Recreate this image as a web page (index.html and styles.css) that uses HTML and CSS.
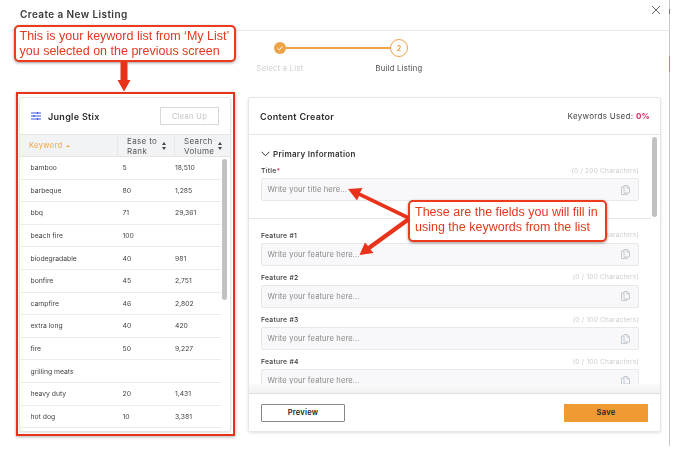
FILE: index.html
```html
<!DOCTYPE html>
<html lang="en">
<head>
  <meta charset="UTF-8">
  <title>Create a New Listing</title>
  <link rel="stylesheet" href="styles.css">
</head>
<body>
  <div class="modal">
    <div class="modal-header">
      <div class="modal-title">Create a New Listing</div>
      <svg class="close-icon" width="10" height="10" viewBox="0 0 10 10"><path d="M1 1l8 8M9 1l-8 8" stroke="#666" stroke-width="1" fill="none"/></svg>
    </div>

    <div class="stepper">
      <div class="step">
        <div class="step-dot done">
          <svg width="8" height="8" viewBox="0 0 8 8"><path d="M1.500 4.200l1.800 1.700 3.200-3.600" stroke="#fff" stroke-width="1" fill="none"/></svg>
        </div>
        <div class="step-label muted">Select a List</div>
      </div>
      <div class="step-line"></div>
      <div class="step">
        <div class="step-dot current">2</div>
        <div class="step-label">Build Listing</div>
      </div>
    </div>

    <div class="columns">
      <div class="card keyword-card">
        <div class="card-header">
          <div class="list-name">
            <svg width="10" height="8" viewBox="0 0 10 8"><path d="M0 1h10M0 4h10M0 7h10" stroke="#3d55e0" stroke-width="1"/><path d="M6.500 0v2M3 3v2M6.500 6v2" stroke="#3d55e0" stroke-width="1.200"/></svg>
            <span>Jungle Stix</span>
          </div>
          <button class="cleanup-button">Clean Up</button>
        </div>
        <div class="table-head">
          <div class="head-cell sorted">Keyword <span class="sort-up"></span></div>
          <div class="head-cell">Ease to Rank <span class="sort-both"></span></div>
          <div class="head-cell">Search Volume <span class="sort-both"></span></div>
        </div>
        <div class="table-body">
          <div class="row"><span>bamboo</span><span>5</span><span>18,510</span></div>
          <div class="row"><span>barbeque</span><span>80</span><span>1,285</span></div>
          <div class="row"><span>bbq</span><span>71</span><span>29,361</span></div>
          <div class="row"><span>beach fire</span><span>100</span><span></span></div>
          <div class="row"><span>biodegradable</span><span>40</span><span>981</span></div>
          <div class="row"><span>bonfire</span><span>45</span><span>2,751</span></div>
          <div class="row"><span>campfire</span><span>46</span><span>2,802</span></div>
          <div class="row"><span>extra long</span><span>40</span><span>420</span></div>
          <div class="row"><span>fire</span><span>50</span><span>9,227</span></div>
          <div class="row"><span>grilling meats</span><span></span><span></span></div>
          <div class="row"><span>heavy duty</span><span>20</span><span>1,431</span></div>
          <div class="row"><span>hot dog</span><span>10</span><span>3,381</span></div>
          <div class="scroll-thumb list-thumb"></div>
        </div>
      </div>

      <div class="card creator-card">
        <div class="card-header">
          <div class="creator-title">Content Creator</div>
          <div class="keywords-used">Keywords Used: <b>0%</b></div>
        </div>
        <div class="form-area">
          <div class="section-title">
            <svg width="9" height="6" viewBox="0 0 9 6"><path d="M.7.800l3.800 4 3.800-4" stroke="#333" stroke-width="1" fill="none"/></svg>
            Primary Information
          </div>
          <div class="field first-field">
            <div class="field-top"><span class="field-label">Title<i>*</i></span><span class="field-count">(0 / 200 Characters)</span></div>
            <div class="field-input">Write your title here...<svg class="copy-icon" width="9" height="10" viewBox="0 0 9 10"><path d="M3 2H.5v7.500h5.500V8M3 .5h3L8.500 3v5H3zM6 .5V3h2.500" stroke="#bcc3cc" stroke-width=".9" fill="none"/></svg></div>
          </div>
          <div class="field-divider"></div>
          <div class="field">
            <div class="field-top"><span class="field-label">Feature #1</span><span class="field-count">(0 / 100 Characters)</span></div>
            <div class="field-input">Write your feature here...<svg class="copy-icon" width="9" height="10" viewBox="0 0 9 10"><path d="M3 2H.5v7.500h5.500V8M3 .5h3L8.500 3v5H3zM6 .5V3h2.500" stroke="#bcc3cc" stroke-width=".9" fill="none"/></svg></div>
          </div>
          <div class="field">
            <div class="field-top"><span class="field-label">Feature #2</span><span class="field-count">(0 / 100 Characters)</span></div>
            <div class="field-input">Write your feature here...<svg class="copy-icon" width="9" height="10" viewBox="0 0 9 10"><path d="M3 2H.5v7.500h5.500V8M3 .5h3L8.500 3v5H3zM6 .5V3h2.500" stroke="#bcc3cc" stroke-width=".9" fill="none"/></svg></div>
          </div>
          <div class="field">
            <div class="field-top"><span class="field-label">Feature #3</span><span class="field-count">(0 / 100 Characters)</span></div>
            <div class="field-input">Write your feature here...<svg class="copy-icon" width="9" height="10" viewBox="0 0 9 10"><path d="M3 2H.5v7.500h5.500V8M3 .5h3L8.500 3v5H3zM6 .5V3h2.500" stroke="#bcc3cc" stroke-width=".9" fill="none"/></svg></div>
          </div>
          <div class="field">
            <div class="field-top"><span class="field-label">Feature #4</span><span class="field-count">(0 / 100 Characters)</span></div>
            <div class="field-input">Write your feature here...<svg class="copy-icon" width="9" height="10" viewBox="0 0 9 10"><path d="M3 2H.5v7.500h5.500V8M3 .5h3L8.500 3v5H3zM6 .5V3h2.500" stroke="#bcc3cc" stroke-width=".9" fill="none"/></svg></div>
          </div>
          <div class="scroll-thumb form-thumb"></div>
        </div>
        <div class="card-footer">
          <button class="preview-button">Preview</button>
          <button class="save-button">Save</button>
        </div>
      </div>
    </div>
  </div>

  <!-- red annotations on top of the screenshot -->
  <div class="list-frame"></div>
  <div class="callout callout-list">This is your keyword list from ‘My List’<br>you selected on the previous screen</div>
  <div class="callout callout-fields">These are the fields you will fill in<br>using the keywords from the list</div>
  <svg class="arrows" width="680" height="453" viewBox="0 0 680 453">
    <path d="M120.500 62h7v18h3l-6.500 11.500L117.500 80h3z" fill="#e8321a"/>
    <path d="M410 216.500l-50-24 2.500-4.500-14.500 1 9 11.500 2-4.500 49.500 24z" fill="#e8321a"/>
    <path d="M408 217l-40 29-3-3.500-5.500 12.500 14-2-3-3.500 40-29z" fill="#e8321a"/>
  </svg>
</body>
</html>
```

FILE: styles.css
```css
* {
  margin: 0;
  padding: 0;
  box-sizing: border-box;
  font-family: Inter, 'Open Sans', sans-serif;
}

body {
  background-color: #fff;
  color: #333;
  width: 680px;
  height: 453px;
  overflow: hidden;
  position: relative;
  filter: blur(0.3px);
}

.modal {
  width: 670px;
  height: 446px;
  padding-left: 19px;
  border-right: 1px solid #c9c9c9;
  border-image: linear-gradient(#c9c9c9 10px, #777 10px, #777 15px, #c9c9c9 15px, #c9c9c9 57px, #a89468 57px, #a89468 73px, #c9c9c9 73px) 1;
}

.modal-header {
  height: 31px;
  margin-left: -9px;
  padding: 0 8px 0 10px;
  border-bottom: 1px solid #e8e8e8;
  display: flex;
  justify-content: space-between;
  align-items: center;
}

.modal-title {
  font-size: 10px;
  font-weight: 600;
  letter-spacing: 0.4px;
  color: #3a3a3a;
  margin-top: -2px;
}

.close-icon {
  margin-top: -10px;
}

.stepper {
  height: 66px;
  padding: 8px 0 0 222px;
  display: flex;
  align-items: flex-start;
}

.step {
  width: 78px;
  height: 40px;
  display: flex;
  flex-direction: column;
  align-items: center;
}

.step-dot {
  height: 18px;
  width: 18px;
  display: flex;
  align-items: center;
  justify-content: center;
  border-radius: 50%;
  font-size: 7px;
  font-weight: 700;
  color: #efa243;
}

.step-dot.done {
  width: 12px;
  height: 12px;
  margin: 3px 0;
  background-color: #efa243;
}

.step-dot.current {
  border: 1.5px solid #efa243;
}

.step-label {
  margin-top: 7px;
  font-size: 7.500px;
  letter-spacing: 0.3px;
  color: #444;
  white-space: nowrap;
}

.step-label.muted {
  color: #ccc;
}

.step-line {
  width: 105px;
  height: 1.500px;
  margin: 8px -31px 0 -33px;
  background-color: #efa243;
}

.columns {
  display: flex;
  gap: 17px;
}

.card {
  background-color: #fff;
  border: 1px solid #e6e6e6;
  border-radius: 3px;
  box-shadow: 0 1px 3px rgba(0, 0, 0, 0.12);
  height: 335px;
  overflow: hidden;
  display: flex;
  flex-direction: column;
}

.keyword-card {
  width: 212px;
}

.creator-card {
  width: 413px;
}

.card-header {
  height: 37px;
  flex-shrink: 0;
  display: flex;
  justify-content: space-between;
  align-items: center;
  padding: 0 11px;
  border-bottom: 1px solid #e6e6e6;
}

.list-name {
  display: flex;
  align-items: center;
  gap: 7px;
  font-size: 9px;
  font-weight: 600;
  letter-spacing: 0.3px;
  color: #2d2d2d;
}

.cleanup-button {
  width: 59px;
  height: 18px;
  background-color: #fff;
  border: 1px solid #d9d9d9;
  font-size: 7.500px;
  letter-spacing: 0.3px;
  color: #c4c4c4;
}

.table-head {
  height: 22px;
  flex-shrink: 0;
  display: grid;
  grid-template-columns: 97px 57px 56px;
  background-color: #f1f3f4;
  border-bottom: 1px solid #e2e4e5;
}

.head-cell {
  position: relative;
  display: flex;
  align-items: center;
  padding: 0 15px 0 9px;
  font-size: 8px;
  line-height: 10px;
  letter-spacing: 0.35px;
  color: #555;
  border-left: 1px solid #e6e8e9;
}

.head-cell.sorted {
  font-size: 7.500px;
  color: #eda649;
  gap: 4px;
  border-left: none;
}

.sort-up {
  border: 2px solid transparent;
  border-top: none;
  border-bottom: 2.500px solid #eda649;
}

.sort-both {
  position: absolute;
  right: 8px;
  top: 7px;
  border: 2.500px solid transparent;
  border-top: none;
  border-bottom: 3px solid #444;
}

.sort-both::after {
  content: "";
  position: absolute;
  left: -2.500px;
  top: 5px;
  border: 2.500px solid transparent;
  border-bottom: none;
  border-top: 3px solid #444;
}

.table-body {
  position: relative;
  flex-grow: 1;
  overflow: hidden;
  padding-right: 9px;
}

.row {
  height: 22.600px;
  display: grid;
  grid-template-columns: 92px 52.500px 1fr;
  align-items: center;
  padding-left: 10.500px;
  font-size: 6.800px;
  color: #444;
  border-bottom: 1px solid #ececec;
}

.scroll-thumb {
  position: absolute;
  width: 5px;
  border-radius: 3px;
  background-color: #c2c2c2;
}

.list-thumb {
  top: 2px;
  right: 3px;
  height: 141px;
}

.creator-title {
  font-size: 9px;
  font-weight: 600;
  letter-spacing: 0.3px;
  color: #2d2d2d;
}

.keywords-used {
  font-size: 8px;
  letter-spacing: 0.3px;
  color: #444;
  margin-right: -1px;
}

.keywords-used b {
  color: #e0245e;
}

.form-area {
  position: relative;
  flex-grow: 1;
  overflow: hidden;
  padding: 0 21px 0 12px;
}

.section-title {
  height: 35px;
  padding-top: 3px;
  display: flex;
  align-items: center;
  gap: 3px;
  font-size: 8px;
  font-weight: 600;
  letter-spacing: 0.3px;
  color: #333;
}

.field {
  height: 42.300px;
}

.first-field {
  height: 36px;
  margin-top: -5px;
}

.field-divider {
  height: 11.500px;
  margin: 17px -12px 0;
  border-top: 1px solid #e6e6e6;
}

.field-top {
  display: flex;
  justify-content: space-between;
  align-items: center;
  height: 11px;
  margin-bottom: 2px;
}

.field-label {
  font-size: 6.800px;
  font-weight: 500;
  letter-spacing: 0.25px;
  color: #333;
}

.field-label i {
  font-style: normal;
  color: #e0245e;
}

.field-count {
  font-size: 6.500px;
  letter-spacing: 0.25px;
  color: #ccc;
}

.field-input {
  height: 23px;
  display: flex;
  justify-content: space-between;
  align-items: center;
  padding: 0 8px 0 5.500px;
  background-color: #f8f8fa;
  border: 1px solid #e8e8ea;
  border-radius: 2px;
  font-size: 7.500px;
  letter-spacing: 0.15px;
  color: #888;
}

.form-thumb {
  top: 2px;
  right: 3px;
  height: 80px;
}

.card-footer {
  position: relative;
  height: 38px;
  flex-shrink: 0;
  display: flex;
  justify-content: space-between;
  align-items: center;
  padding: 0 12px;
  background-color: #fff;
  border-top: 1px solid #dedede;
}

.card-footer::before {
  content: "";
  position: absolute;
  left: 0;
  right: 0;
  top: -10px;
  height: 9px;
  background: linear-gradient(#fafafa, #f2f2f2);
}

.preview-button,
.save-button {
  width: 84px;
  height: 18px;
  font-size: 7.500px;
  font-weight: 600;
  letter-spacing: 0.25px;
  color: #222;
}

.preview-button {
  background-color: #fff;
  border: 1px solid #888;
  border-radius: 1px;
}

.save-button {
  background-color: #f09a33;
  border: none;
}

.list-frame {
  position: absolute;
  left: 16px;
  top: 92px;
  width: 219px;
  height: 344px;
  border: 2px solid #e8321a;
  box-shadow: 0 1px 3px rgba(0, 0, 0, 0.3);
}

.callout {
  position: absolute;
  background-color: #fff;
  border: 2px solid #ee3a1c;
  border-radius: 5px;
  box-shadow: 0 1px 3px rgba(0, 0, 0, 0.4);
  font-family: 'Liberation Sans', sans-serif;
  font-size: 12.500px;
  line-height: 15px;
  color: #e2391f;
  white-space: nowrap;
}

.callout-list {
  left: 14px;
  top: 25px;
  width: 222px;
  height: 37px;
  padding: 1.5px 0 0 3.500px;
}

.callout-fields {
  left: 408px;
  top: 200px;
  width: 199px;
  height: 42px;
  padding: 3px 0 0 5px;
}

.arrows {
  position: absolute;
  left: 0;
  top: 0;
  pointer-events: none;
}
```
